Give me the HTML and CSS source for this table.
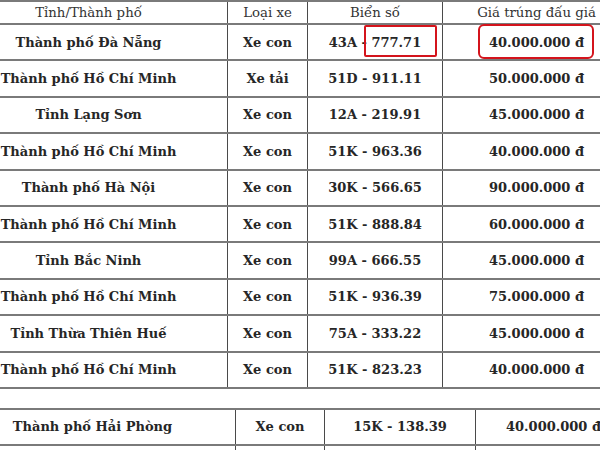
FILE: index.html
```html
<!DOCTYPE html>
<html lang="vi">
<head>
<meta charset="utf-8">
<link rel="stylesheet" href="styles.css">
</head>
<body>
<div class="viewport">
<div class="page">
  <table class="grid grid-main">
    <colgroup>
      <col class="c1"><col class="c2"><col class="c3"><col class="c4">
    </colgroup>
    <thead>
      <tr class="head">
        <th>Tỉnh/Thành phố</th>
        <th>Loại xe</th>
        <th>Biển số</th>
        <th>Giá trúng đấu giá</th>
      </tr>
    </thead>
    <tbody>
      <tr>
        <td>Thành phố Đà Nẵng</td>
        <td>Xe con</td>
        <td>43A - <span class="anchor">777.71<span class="mark mark-plate"></span></span></td>
        <td><span class="anchor">40.000.000 đ<span class="mark mark-price"></span></span></td>
      </tr>
      <tr><td>Thành phố Hồ Chí Minh</td><td>Xe tải</td><td>51D - 911.11</td><td>50.000.000 đ</td></tr>
      <tr><td>Tỉnh Lạng Sơn</td><td>Xe con</td><td>12A - 219.91</td><td>45.000.000 đ</td></tr>
      <tr><td>Thành phố Hồ Chí Minh</td><td>Xe con</td><td>51K - 963.36</td><td>40.000.000 đ</td></tr>
      <tr><td>Thành phố Hà Nội</td><td>Xe con</td><td>30K - 566.65</td><td>90.000.000 đ</td></tr>
      <tr><td>Thành phố Hồ Chí Minh</td><td>Xe con</td><td>51K - 888.84</td><td>60.000.000 đ</td></tr>
      <tr><td>Tỉnh Bắc Ninh</td><td>Xe con</td><td>99A - 666.55</td><td>45.000.000 đ</td></tr>
      <tr><td>Thành phố Hồ Chí Minh</td><td>Xe con</td><td>51K - 936.39</td><td>75.000.000 đ</td></tr>
      <tr><td>Tỉnh Thừa Thiên Huế</td><td>Xe con</td><td>75A - 333.22</td><td>45.000.000 đ</td></tr>
      <tr><td>Thành phố Hồ Chí Minh</td><td>Xe con</td><td>51K - 823.23</td><td>40.000.000 đ</td></tr>
    </tbody>
  </table>

  <table class="grid grid-second">
    <colgroup>
      <col class="d1"><col class="d2"><col class="d3"><col class="d4">
    </colgroup>
    <tbody>
      <tr><td>Thành phố Hải Phòng</td><td>Xe con</td><td>15K - 138.39</td><td>40.000.000 đ</td></tr>
      <tr><td>&nbsp;</td><td>&nbsp;</td><td>&nbsp;</td><td>&nbsp;</td></tr>
    </tbody>
  </table>
</div>
</div>
</body>
</html>
```

FILE: styles.css
```css
html, body {
  margin: 0;
  padding: 0;
  background: #ffffff;
}

.viewport {
  width: 600px;
  height: 450px;
  overflow: hidden;
}

.page {
  margin-left: -51px;
  width: 682px;
  font-family: "DejaVu Serif", "Liberation Serif", serif;
  color: #262626;
}

.grid {
  border-collapse: collapse;
  table-layout: fixed;
}

.grid-main { width: 681px; }
.grid-second { width: 682px; margin-top: 19px; }

.c1 { width: 278px; }
.c2 { width: 80px; }
.c3 { width: 135px; }
.c4 { width: 188px; }

.d1 { width: 286px; }
.d2 { width: 89px; }
.d3 { width: 151px; }
.d4 { width: 156px; }

.grid th,
.grid td {
  border-top: 2px solid #7a7a7a;
  border-bottom: 2px solid #7a7a7a;
  border-left: 1px solid #4a4a4a;
  border-right: 1px solid #4a4a4a;
  text-align: center;
  padding: 0;
  white-space: nowrap;
}

.grid th {
  font-weight: normal;
  font-size: 13.3px;
  color: #333333;
  height: 21px;
}

.grid td {
  font-weight: bold;
  font-size: 13px;
  height: 34.4px;
}

.grid-second td { height: 34px; }

.anchor {
  position: relative;
}

.mark {
  position: absolute;
  border: 2px solid #d4141c;
  box-sizing: border-box;
  pointer-events: none;
}

.mark-plate {
  left: -7px;
  right: -16px;
  top: -10px;
  height: 32px;
  border-radius: 2px;
}

.mark-price {
  left: -11px;
  right: -10px;
  top: -11px;
  height: 35px;
  border-width: 2.5px;
  border-radius: 6px;
}
```
